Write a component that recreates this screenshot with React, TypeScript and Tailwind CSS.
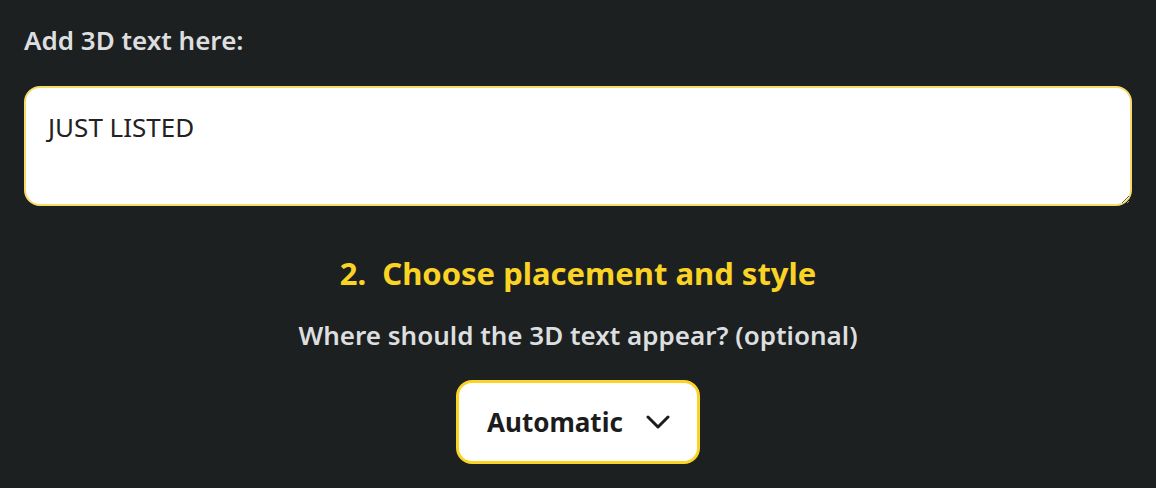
export default function App() {
    return (
        <div
            className="min-h-screen w-full bg-[#1c2021] px-6 pt-[22px]"
            style={{ fontFamily: '"Noto Sans", "Open Sans", sans-serif' }}
        >
            <label className="block text-[26px] font-semibold leading-[36px] text-[#dcdedf]">
                Add 3D text here:
            </label>
            <textarea
                defaultValue="JUST LISTED"
                className="mt-[28px] block h-[120px] w-full resize-y rounded-[16px] border-2 border-[#f5dc6a] bg-white px-[22px] pt-[21px] text-[26px] leading-[36px] text-[#222] outline-none"
            />
            <div className="flex flex-col items-center">
                <h2 className="mt-[47px] text-[31px] font-bold leading-[40px] text-[#fbd325]">
                    2.&nbsp; Choose placement and style
                </h2>
                <p className="mt-[24px] text-[26px] font-semibold leading-[36px] text-[#dcdedf]">
                    Where should the 3D text appear? (optional)
                </p>
                <button className="mt-[27px] flex h-[84px] w-[244px] items-center justify-between rounded-[16px] border-[3px] border-[#fbd325] bg-white pl-[28px] pr-[27px] text-[26px] font-bold leading-[36px] text-[#1c1c1c]">
                    <span>Automatic</span>
                    <svg width="24" height="14" viewBox="0 0 24 14" fill="none" stroke="currentColor" strokeWidth="3" strokeLinecap="round" strokeLinejoin="round">
                        <polyline points="2,2 12,12 22,2" />
                    </svg>
                </button>
            </div>
        </div>
    );
}
